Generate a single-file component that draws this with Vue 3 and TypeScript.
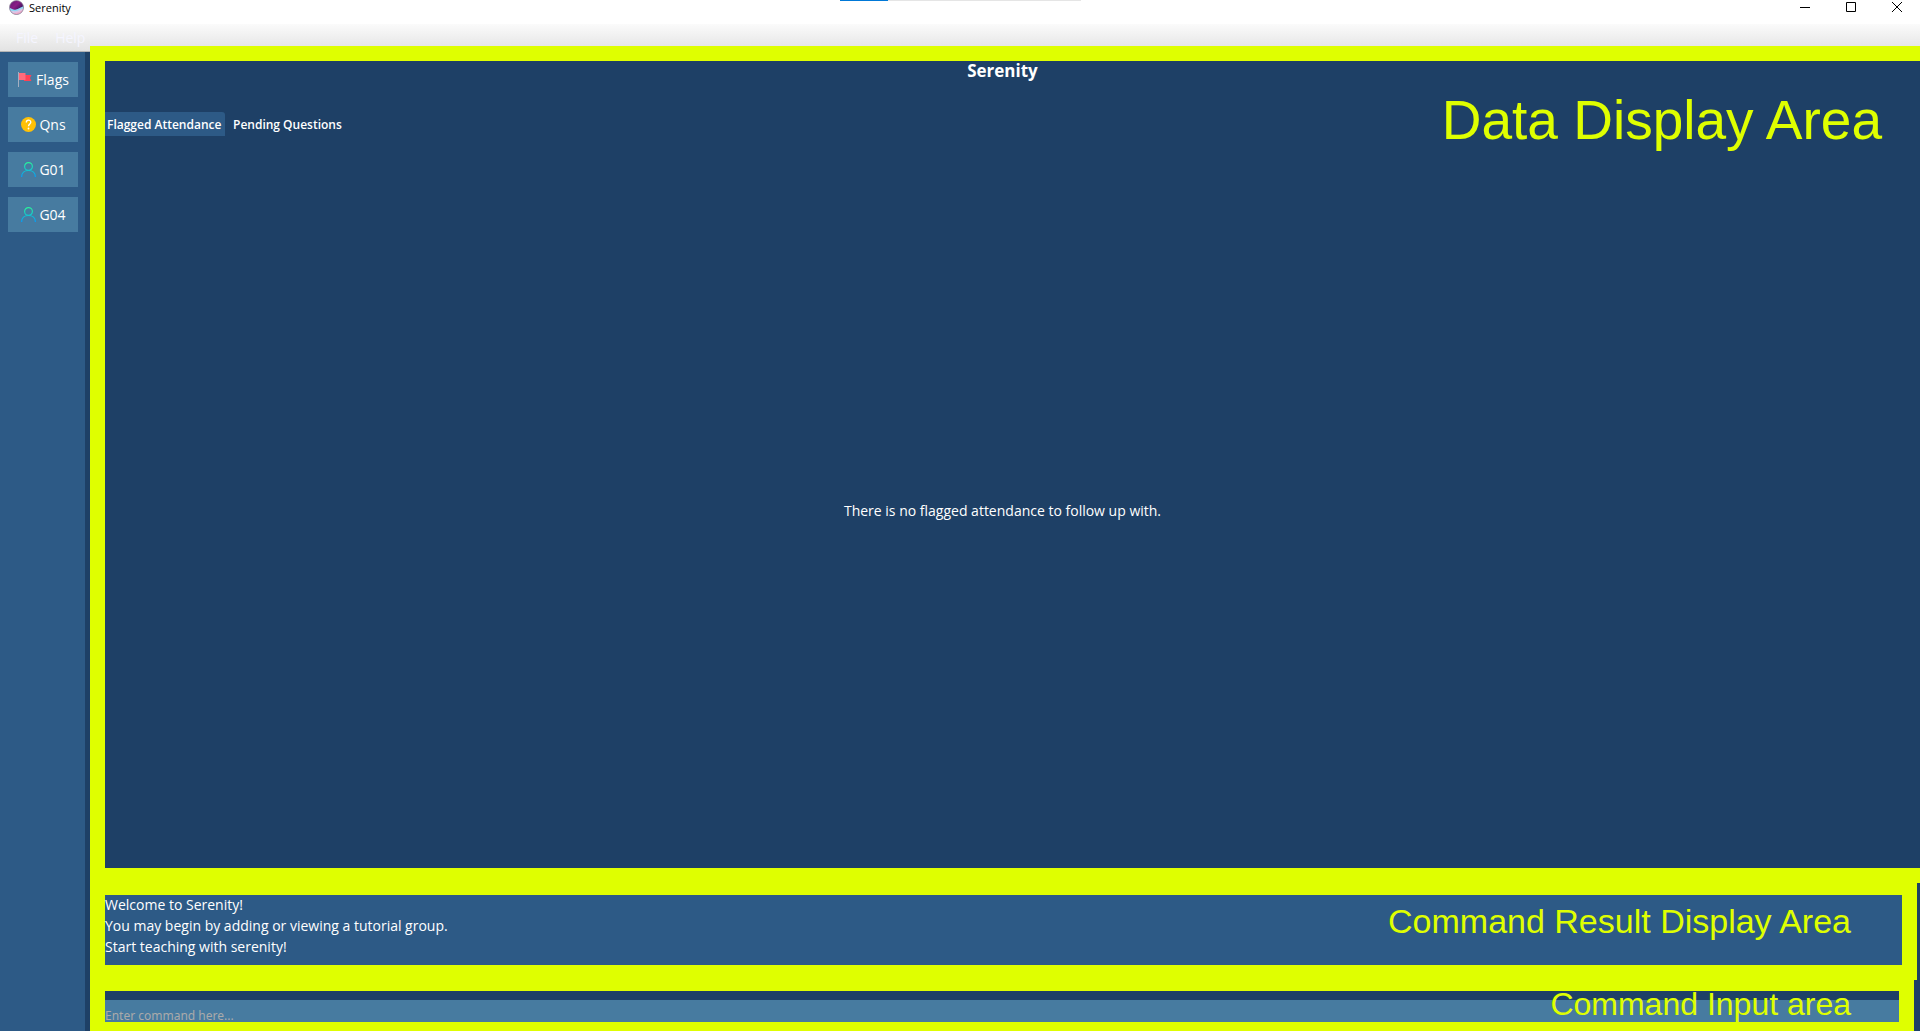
<script setup lang="ts">
import { ref } from 'vue'

type Icon = 'flag' | 'question' | 'person'
interface NavItem { label: string; icon: Icon }

const nav: NavItem[] = [
  { label: 'Flags', icon: 'flag' },
  { label: 'Qns', icon: 'question' },
  { label: 'G01', icon: 'person' },
  { label: 'G04', icon: 'person' },
]
const tabs: string[] = ['Flagged Attendance', 'Pending Questions']
const activeTab = ref(0)
const messages: string[] = [
  'Welcome to Serenity!',
  'You may begin by adding or viewing a tutorial group.',
  'Start teaching with serenity!',
]
const command = ref('')
</script>

<template>
  <div class="window">
    <header class="titlebar">
      <div class="progress"><span class="progress-fill"></span></div>
      <svg class="logo" width="15" height="15" viewBox="0 0 15 15">
        <defs>
          <clipPath id="disc"><circle cx="7.500" cy="7.500" r="7" /></clipPath>
          <linearGradient id="sky" x1="0" y1="0" x2="1" y2="1">
            <stop offset="0" stop-color="#5a1a72" />
            <stop offset="0.400" stop-color="#8a1c86" />
            <stop offset="0.700" stop-color="#3f1460" />
          </linearGradient>
        </defs>
        <g clip-path="url(#disc)">
          <rect width="15" height="15" fill="url(#sky)" />
          <path d="M0 7C3 9.500 5 10 7 9.500S12 7 15 6V15H0Z" fill="#8fd8f4" />
          <path d="M0 10C4 11.500 7 11.500 9 10.500S13 8.500 15 8V15H0Z" fill="#d9c6e6" />
          <path d="M3 13C8 13.500 11 12 14 9.500V15H3Z" fill="#f3a9c8" />
        </g>
        <circle cx="7.500" cy="7.500" r="7" fill="none" stroke="#8d8796" stroke-width="0.700" />
      </svg>
      <span class="app-name">Serenity</span>
      <div class="controls">
        <button aria-label="Minimize"><svg width="10" height="10"><path d="M0 5.500H10" /></svg></button>
        <button aria-label="Maximize"><svg width="10" height="10"><path d="M.5 .5H9.500V9.500H.5Z" /></svg></button>
        <button aria-label="Close"><svg width="10" height="10"><path d="M0 0L10 10M10 0L0 10" /></svg></button>
      </div>
    </header>
    <nav class="menubar">
      <button>File</button>
      <button>Help</button>
    </nav>
    <div class="body">
      <aside class="sidebar">
        <button v-for="item in nav" :key="item.label" class="nav-button">
          <svg v-if="item.icon === 'flag'" width="15" height="15" viewBox="0 0 15 15">
            <path d="M6 3H13.500L12 6L13.500 9H6Z" fill="#ff4155" />
            <path d="M1 1H7.500V8H1Z" fill="#ff6b7c" />
            <path d="M.5 0V15" stroke="#a4afc1" />
          </svg>
          <svg v-else-if="item.icon === 'question'" width="15" height="15" viewBox="0 0 15 15">
            <circle cx="7.500" cy="7.500" r="7.500" fill="#ffc107" />
            <path d="M5.300 5.500C5.300 2.300 9.800 2.300 9.800 5.300C9.800 7 7.500 7 7.500 9.300" fill="none" stroke="#fff" stroke-width="1.300" />
            <circle cx="7.500" cy="11.500" r="0.900" fill="#fff" />
          </svg>
          <svg v-else width="15" height="15" viewBox="0 0 15 15">
            <defs>
              <linearGradient id="person" gradientUnits="userSpaceOnUse" x1="0" y1="0" x2="0" y2="15">
                <stop offset="0" stop-color="#2af598" />
                <stop offset="1" stop-color="#009efd" />
              </linearGradient>
            </defs>
            <g fill="none" stroke="url(#person)" stroke-width="1.200">
              <circle cx="7.500" cy="4.500" r="3.900" />
              <path d="M.6 15C.6 11 3.500 8.500 7.500 8.500S14.400 11 14.400 15" />
            </g>
          </svg>
          <span>{{ item.label }}</span>
        </button>
      </aside>
      <main class="content">
        <section class="area data-area">
          <h1>Serenity</h1>
          <div class="tabs" role="tablist">
            <button
              v-for="(tab, i) in tabs"
              :key="tab"
              role="tab"
              :class="{ active: i === activeTab }"
              :aria-selected="i === activeTab"
              @click="activeTab = i"
            >{{ tab }}</button>
          </div>
          <p class="empty">There is no flagged attendance to follow up with.</p>
          <span class="callout large">Data Display Area</span>
        </section>
        <section class="area result-area">
          <p v-for="line in messages" :key="line">{{ line }}</p>
          <span class="callout">Command Result Display Area</span>
        </section>
        <section class="area input-area">
          <input v-model="command" type="text" aria-label="Command" placeholder="Enter command here..." />
          <span class="callout">Command Input area</span>
        </section>
      </main>
    </div>
  </div>
</template>

<style>
body {
  margin: 0;
}
</style>

<style scoped>
.window {
  display: flex;
  flex-direction: column;
  height: 100vh;
  overflow: hidden;
  background: #1e4066;
  color: #fff;
  font-family: "Open Sans", "Noto Sans", sans-serif;
  font-size: 14px;
}
.window * {
  box-sizing: border-box;
}
button {
  border: 0;
  padding: 0;
  background: none;
  color: inherit;
  font: inherit;
}
.titlebar {
  position: relative;
  display: flex;
  flex: none;
  height: 24px;
  padding-left: 9px;
  gap: 5px;
  background: #fff;
  color: #000;
}
.progress {
  position: absolute;
  top: 0;
  left: 840px;
  width: 241px;
  height: 1px;
  background: #e5e5e5;
}
.progress-fill {
  display: block;
  width: 20%;
  height: 1px;
  background: #0078d7;
}
.app-name {
  font-size: 11px;
  line-height: 16px;
}
.controls {
  display: flex;
  margin-left: auto;
}
.controls button {
  display: flex;
  justify-content: center;
  width: 46px;
  padding-top: 2px;
}
.controls path {
  fill: none;
  stroke: #000;
}
.menubar {
  display: flex;
  flex: none;
  height: 28px;
  padding-left: 16px;
  gap: 17px;
  border-bottom: 1px solid #b4b4b4;
  background: linear-gradient(#fbfbfb, #e3e3e3);
  color: #f5f5ff;
}
.body {
  display: flex;
  flex: 1;
  min-height: 0;
}
.sidebar {
  display: flex;
  flex: none;
  flex-direction: column;
  width: 85px;
  padding: 10px 7px 10px 8px;
  gap: 10px;
  background: #2d5a86;
}
.nav-button {
  display: flex;
  align-items: center;
  justify-content: center;
  height: 35px;
  padding-left: 1px;
  gap: 3px;
  background: #477ba0;
}
.content {
  display: flex;
  flex: 1;
  flex-direction: column;
  min-width: 0;
  margin: -6px 0 0 5px;
}
.area {
  position: relative;
  border: 15px solid #dfff00;
}
.data-area {
  display: flex;
  flex: 1;
  flex-direction: column;
  border-right: 0;
}
h1 {
  margin: 0;
  padding-right: 20px;
  font-size: 17px;
  line-height: 20px;
  text-align: center;
}
.tabs {
  display: flex;
  margin-top: 31px;
}
.tabs button {
  min-width: 120px;
  height: 24px;
  padding: 0 2px;
  border-radius: 0 3px 0 0;
  font-size: 12px;
  font-weight: 600;
  text-align: left;
}
.tabs button + button {
  padding-left: 8px;
}
.tabs .active {
  background: #2d5a86;
}
.empty {
  margin: auto 0;
  padding: 16px 20px 0 0;
  text-align: center;
}
.result-area {
  height: 97px;
  margin-right: 3px;
  border-top-width: 12px;
  background: #2d5a86;
}
.result-area p {
  margin: 0;
  line-height: 21px;
}
.result-area p:first-child {
  line-height: 20px;
}
.input-area {
  height: 51px;
  margin-right: 6px;
  padding-top: 9px;
  border-top-width: 11px;
  border-bottom-width: 9px;
}
input {
  display: block;
  width: 100%;
  height: 22px;
  padding: 8px 0 0;
  border: 0;
  outline: 0;
  background: #477ba0;
  color: #fff;
  font-family: "Noto Sans", sans-serif;
  font-size: 12px;
  line-height: 14px;
}
input::placeholder {
  color: #aaa;
  opacity: 1;
}
.callout {
  position: absolute;
  top: 7px;
  right: 51px;
  color: #dfff00;
  font-family: "Liberation Sans", Arial, sans-serif;
  font-size: 34px;
  line-height: 38px;
  white-space: nowrap;
}
.callout.large {
  top: 28px;
  right: 38px;
  font-size: 55px;
  line-height: 62px;
}
.input-area .callout {
  top: -6px;
  right: 48px;
  font-size: 32px;
}
</style>
